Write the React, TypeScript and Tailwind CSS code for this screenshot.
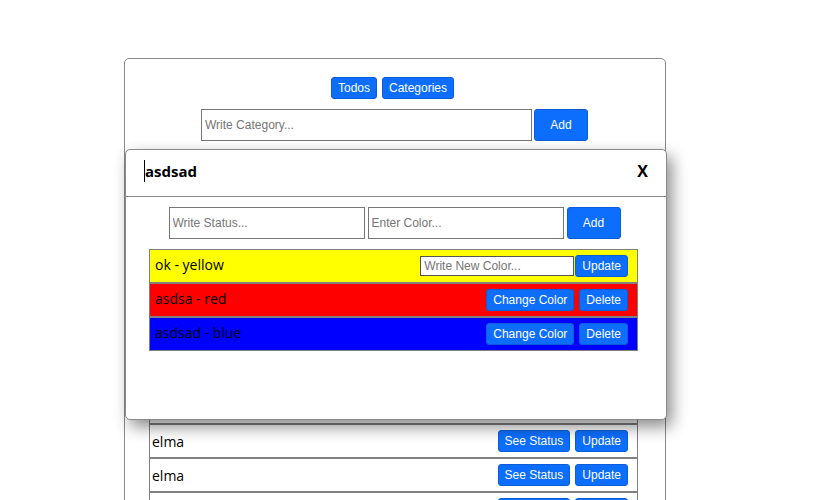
import React from 'react';

const btn =
  "h-[22px] px-[6px] rounded-[3px] border border-[#0b5ed7] bg-[#0d6efd] text-white text-[12px] leading-none font-['Liberation_Sans',Arial,sans-serif]";
const bigBtn =
  "h-[32px] w-[54px] rounded-[3px] border border-[#0b5ed7] bg-[#0d6efd] text-white text-[12px] leading-none font-['Liberation_Sans',Arial,sans-serif]";
const input =
  "h-[32px] border border-[#767676] bg-white px-[3px] text-[12px] placeholder:text-[#757575] outline-none font-['Liberation_Sans',Arial,sans-serif]";

const categories = ['elma', 'armut', 'muz', 'kiraz', 'elma', 'elma', 'elma', 'elma', 'elma', 'elma', 'elma'];

const statuses = [
  { name: 'ok', color: 'yellow', bg: 'bg-[#ffff00]', editing: true },
  { name: 'asdsa', color: 'red', bg: 'bg-[#ff0000]', editing: false },
  { name: 'asdsad', color: 'blue', bg: 'bg-[#0000ff]', editing: false },
];

const App = () => {
  return (
    <div className="relative h-[500px] overflow-hidden bg-white font-['Open_Sans',sans-serif] text-black">
      <div className="pt-[58px]">
        <div className="ml-[124px] w-[542px] rounded-[5px] border border-[#8a8a8a] pt-[18px] pb-4">
          <div className="flex justify-center gap-[5px] pr-[5px]">
            <button className={btn}>Todos</button>
            <button className={btn}>Categories</button>
          </div>
          <div className="mt-[10px] flex justify-center gap-[2px] pr-[1px]">
            <input className={`${input} w-[331px]`} placeholder="Write Category..." />
            <button className={bigBtn}>Add</button>
          </div>
          <div className="ml-[24px] mt-[11px] w-[489px]">
            {categories.map((c, i) => (
              <div
                key={i}
                className="flex h-[34px] items-center justify-between border border-[#808080] pl-[2px] pr-[9px] text-[14px]"
              >
                <span>{c}</span>
                <div className="flex gap-[5px]">
                  <button className={btn}>See Status</button>
                  <button className={btn}>Update</button>
                </div>
              </div>
            ))}
          </div>
        </div>
      </div>

      {/* status modal */}
      <div className="absolute left-[125px] top-[149px] flex h-[271px] w-[542px] flex-col rounded-[5px] border border-[#8a8a8a] bg-white shadow-[5px_7px_16px_rgba(0,0,0,0.45)]">
        <div className="flex h-[47px] items-center justify-between border-b border-[#8a8a8a] pb-[5px] pl-[18px] pr-[18px]">
          <span className="border-l border-black pr-1 text-[15px] font-bold leading-[22px]">asdsad</span>
          <span className="text-[16px] font-bold">X</span>
        </div>
        <div className="mt-[10px] flex justify-center gap-[3px] pr-[3px]">
          <input className={`${input} w-[196px]`} placeholder="Write Status..." />
          <input className={`${input} w-[196px]`} placeholder="Enter Color..." />
          <button className={bigBtn}>Add</button>
        </div>
        <div className="ml-[23px] mt-[10px] w-[489px]">
          {statuses.map((s) => (
            <div
              key={s.name}
              className={`flex h-[34px] items-center justify-between border border-[#808080] pl-[5px] pr-[9px] text-[14px] ${s.bg}`}
            >
              <span className="mb-[3px]">
                {s.name} - {s.color}
              </span>
              {s.editing ? (
                <div className="flex items-center gap-[1px]">
                  <input
                    className="h-[20px] w-[154px] border border-[#555] bg-white px-[3px] text-[12px] placeholder:text-[#757575] outline-none font-['Liberation_Sans',Arial,sans-serif]"
                    placeholder="Write New Color..."
                  />
                  <button className={btn}>Update</button>
                </div>
              ) : (
                <div className="flex gap-[5px]">
                  <button className={btn}>Change Color</button>
                  <button className={btn}>Delete</button>
                </div>
              )}
            </div>
          ))}
        </div>
      </div>
    </div>
  );
};

export default App;
